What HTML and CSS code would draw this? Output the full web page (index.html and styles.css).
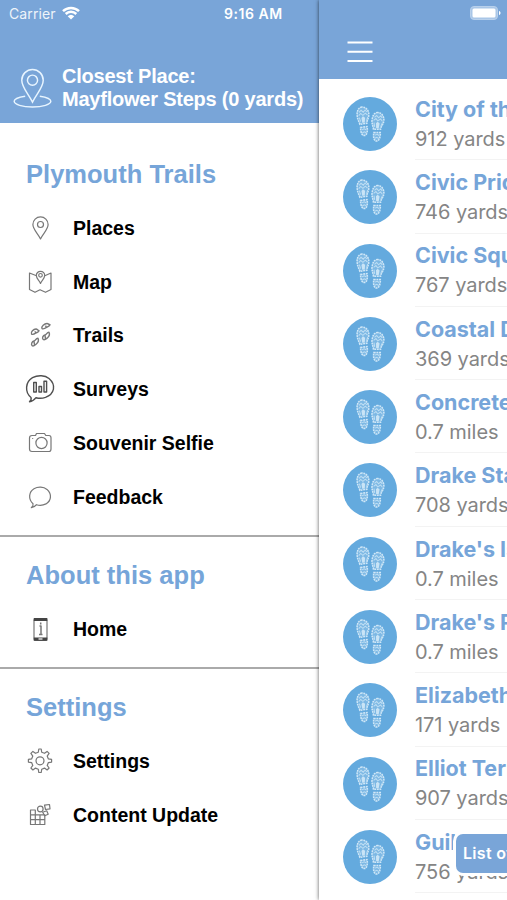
FILE: index.html
```html
<!DOCTYPE html>
<html lang="en">
<head>
<meta charset="utf-8">
<title>Plymouth Trails</title>
<link rel="stylesheet" href="styles.css">
</head>
<body>
<svg class="defs" width="0" height="0" aria-hidden="true">
  <symbol id="shoe" viewBox="0 0 14 30">
    <path class="tread" d="M6 1C2.500 1 .8 5 .9 9c.1 3.500 1.600 5.500 2.200 8.500l6.800-.6c0-3 2.500-5 2.400-9C12.200 4 9.500 1 6 1Z"/>
    <path class="tread" d="m3.700 20.500 6.200-.4c.6 3-.1 8.400-2.900 8.400-3 0-3.600-4.500-3.300-8Z"/>
    <path class="lugs" d="m3 6 2-2 2 2 2-2 1.500 2M2.500 9l2-2 2 2 2.500-2 2 2M4 15l-1-4M10 14l1-3M5 23l2-1 2 1M5 26l2-1 2 1"/>
    <path class="sole" d="M5 11.500 6.500 10 8.500 11.500 8 16H5.500Z"/>
  </symbol>
  <symbol id="steps" viewBox="0 0 54 54">
    <circle cx="27" cy="27" r="27" fill="#64aade"/>
    <use href="#shoe" x="13.500" y="8.500" width="14.500" height="32" transform="rotate(-3 21 25)"/>
    <use href="#shoe" x="27.500" y="13.500" width="14.500" height="33" transform="rotate(5 34 30)"/>
  </symbol>
</svg>
<div class="screen">
  <aside class="drawer">
    <header class="drawer-head">
      <div class="status">
        <span class="carrier">Carrier</span>
        <svg class="wifi" viewBox="0 0 18 14"><path d="M1 5.200a11.500 11.500 0 0 1 16 0M3.700 8a7.600 7.600 0 0 1 10.600 0"/><path class="dot" d="m9 13.500-3.300-3.300a4.800 4.800 0 0 1 6.600 0Z"/></svg>
        <span class="time">9:16 AM</span>
      </div>
      <div class="closest">
        <svg class="closest-pin" viewBox="0 0 40 42"><path d="M20 35.500C16 27 9 20.500 9 13a11 11 0 0 1 22 0c0 7.500-7 14-11 22.500Z"/><circle cx="20" cy="13" r="5.200"/><path d="M12.500 29.500C6 30.500 1.200 32.300 1.200 34.700c0 3.200 8.400 5.800 18.800 5.800s18.800-2.600 18.800-5.800c0-2.400-4.800-4.200-11.300-5.200"/></svg>
        <p>Closest Place:<br><span class="place">Mayflower Steps (0 yards)</span></p>
      </div>
    </header>
    <section class="group trails">
      <h2>Plymouth Trails</h2>
      <ul>
        <li><svg viewBox="0 0 34 34"><path d="M17.500 28C15.500 23 9.900 18.700 9.900 13.500a7.600 7.600 0 0 1 15.200 0c0 5.200-5.600 9.500-7.600 14.500Z"/><circle cx="17.500" cy="13.500" r="3"/></svg><span>Places</span></li>
        <li><svg viewBox="0 0 34 34"><path d="M13.500 10.800 6.500 8v16.500l5.500 2.800 5-2.500 5.500 2.500 5.500-2.800V8l-6.200 2.800"/><path d="M17.500 18.500c-1-3-4.200-5-4.200-8a4.200 4.200 0 0 1 8.400 0c0 3-3.200 5-4.200 8Z"/><circle cx="17.500" cy="10.300" r="1.800"/></svg><span>Map</span></li>
        <li><svg class="prints" viewBox="0 0 34 34"><path d="M8.500 16c-1-2 2-5 4.500-5 1.500 0 1.500 1.500 3 1.700-.5 1.700-2 1.600-3 2.200-1.500 1-3.500 2-4.500 1.100Zm4.300-1.100-1-1.500"/><path d="M19 10.500c-1-2 2.500-5 5-5 1.500 0 1.500 1 3 1.200-.5 1.700-2 1.800-3 2.500-1.500 1-4 2.300-5 1.300Zm4.500-1-1-1.800"/><path d="M20.200 21.500c-1.500-1.500-.2-4 1.800-4.500s1.500-2.500 4-2.700c1 2.200-.2 4.500-1.700 5.700-1.500 1.300-2.800 2.500-4.100 1.500Zm2.300-.7-.5-3.500"/><path d="M9.200 27.800c-1.500-1.500-.2-4.300 1.800-4.800s1.500-2.500 4-2.700c1 2.200-.2 4.500-1.700 5.700-1.500 1.300-2.800 2.800-4.100 1.800Zm2.300-1-.5-3.500"/></svg><span>Trails</span></li>
        <li><svg class="dark" viewBox="0 0 34 34"><path d="M8 25.500C1.500 20 2.300 10 9.500 5.700c5.500-3 12.500-2.500 16.500.8 7.500 6.500 5.500 15.500-3.500 18.900-3.500 1.200-6.500 1.100-9.500.3-1.500 2-3.700 3.800-6.500 4 1.700-1.500 2.100-2.600 1.500-4.200Z"/><path d="M10.700 10.500h2.600V20h-2.600ZM16 14.500h2.500V20H16ZM21 9.300h2.600V20H21Z"/></svg><span>Surveys</span></li>
        <li><svg viewBox="0 0 34 34"><path d="M6.500 12c0-1.700.8-2.500 2.500-2.500h3.500l1-2h8l1.300 2H26c1.500 0 2 .8 2 2.300V23c0 1.700-.5 2.500-2 2.500H9c-1.700 0-2.500-.8-2.500-2.500Z"/><circle cx="18.500" cy="17" r="5.600"/><path d="M9.200 12.500h1"/></svg><span>Souvenir Selfie</span></li>
        <li><svg viewBox="0 0 34 34"><path d="M10 23.700c-5-4.500-4.200-12 1-15 4-2.200 9.500-2 13 .7 5 4.500 4.500 11.300-1 14.500-3 1.500-6.500 1.700-9.500.8-1.200 1.700-2.800 2.700-5.200 3 1.600-1.400 2.200-2.400 1.700-4Z"/></svg><span>Feedback</span></li>
      </ul>
    </section>
    <section class="group about">
      <h2>About this app</h2>
      <ul>
        <li><svg viewBox="0 0 34 34"><rect x="11" y="6.500" width="13" height="22" rx="1.500"/><path class="fill" d="M10.800 6h13.500v3H10.800ZM10.800 25.500h13.500v3.300H10.800Z"/><path d="M16.500 14h1.500v8M16 22.500h3.500M17.700 10.500v2" stroke-width="1.500"/><path class="light" d="M15.500 27h4"/></svg><span>Home</span></li>
      </ul>
    </section>
    <section class="group settings">
      <h2>Settings</h2>
      <ul>
        <li><svg viewBox="0 0 34 34"><path d="M15.300 8.200 15.800 5h2.400l.5 3.200 2.800 1.100 2.600-1.900 2 2-1.900 2.700 1.200 2.800 3.200.5v2.700l-3.200.5-1.200 2.800 1.900 2.600-2 2-2.600-1.900-2.800 1.200-.5 3.200h-2.400l-.5-3.200-2.800-1.200-2.600 1.900-2-2 1.900-2.600-1.200-2.800-3.200-.5v-2.700l3.200-.5 1.200-2.800-1.900-2.700 2-2 2.600 1.900Z"/><circle cx="17" cy="16.800" r="4"/></svg><span>Settings</span></li>
        <li><svg viewBox="0 0 34 34"><path d="M7.500 12h4.800v14.500H7.500ZM7.500 16.800h14.300v9.700H12.300v-9.700M7.500 21.700h14.300M17 16.800v9.700"/><circle cx="17.300" cy="11" r="2.800"/><path d="m21.500 7.200 5-.7.500 4.300-4.500.7ZM19.700 14.300l4-1.500 1.500 3.500-3.500 1.500Z"/></svg><span>Content Update</span></li>
      </ul>
    </section>
  </aside>
  <main class="content">
    <header class="bar">
      <div class="status right"><svg class="battery" viewBox="0 0 31 14"><rect x=".5" y=".5" width="27" height="13" rx="3.500"/><rect class="charge" x="2.500" y="2.500" width="23" height="9" rx="1.500"/><path class="charge" d="M29 5c2 .5 2 3.500 0 4Z"/></svg></div>
      <svg class="menu" viewBox="0 0 26 22"><path d="M.5 1.500h25M.5 10.800h25M.5 20h25"/></svg>
    </header>
    <div class="list">
      <article><svg><use href="#steps"/></svg><div><h3>City of the Sea</h3><p>912 yards</p></div></article>
      <article><svg><use href="#steps"/></svg><div><h3>Civic Pride</h3><p>746 yards</p></div></article>
      <article><svg><use href="#steps"/></svg><div><h3>Civic Square</h3><p>767 yards</p></div></article>
      <article><svg><use href="#steps"/></svg><div><h3>Coastal Defence</h3><p>369 yards</p></div></article>
      <article><svg><use href="#steps"/></svg><div><h3>Concrete</h3><p>0.7 miles</p></div></article>
      <article><svg><use href="#steps"/></svg><div><h3>Drake Statue</h3><p>708 yards</p></div></article>
      <article><svg><use href="#steps"/></svg><div><h3>Drake's Island</h3><p>0.7 miles</p></div></article>
      <article><svg><use href="#steps"/></svg><div><h3>Drake's Place</h3><p>0.7 miles</p></div></article>
      <article><svg><use href="#steps"/></svg><div><h3>Elizabethan</h3><p>171 yards</p></div></article>
      <article><svg><use href="#steps"/></svg><div><h3>Elliot Terrace</h3><p>907 yards</p></div></article>
      <article><svg><use href="#steps"/></svg><div><h3>Guildhall</h3><p>756 yards</p></div></article>
    </div>
    <div class="toggle">List of</div>
  </main>
</div>
</body>
</html>
```

FILE: styles.css
```css
* { box-sizing: border-box; margin: 0; padding: 0; }
body { width: 507px; height: 900px; overflow: hidden; background: #fff; font-family: "Liberation Sans", Arial, sans-serif; }
.defs { position: absolute; }
.screen { display: flex; width: 507px; height: 900px; overflow: hidden; }
.drawer { width: 319px; flex: none; background: #fff; }
.drawer-head { height: 123px; background: #79a5d8; color: #fff; }
.status { display: flex; align-items: center; height: 27px; padding-left: 9px; font-family: Inter, sans-serif; font-size: 14px; }
.carrier { width: 47px; letter-spacing: .1px; opacity: .88; white-space: nowrap; }
.wifi { width: 18px; height: 14px; margin: -2px 0 0 6px; fill: none; stroke: #fff; stroke-width: 2.500; }
.wifi .dot { fill: #fff; stroke: none; }
.time { margin-left: 144px; font-weight: 600; font-size: 14px; letter-spacing: .55px; white-space: nowrap; }
.closest { display: flex; margin-top: 38px; padding-left: 13px; }
.closest-pin { width: 39px; height: 42px; margin-top: 2px; fill: none; stroke: #e8f5ff; stroke-width: 1.500; }
.closest p { margin-left: 10px; font-size: 20px; font-weight: bold; line-height: 23px; letter-spacing: -.22px; white-space: nowrap; }
.group { border-bottom: 2px solid #aaa; overflow: hidden; }
.group:last-child { border: 0; }
.trails { height: 414px; }
.about { height: 132px; }
h2 { color: #76a5d9; font-size: 25.500px; line-height: 30px; letter-spacing: .02px; padding-left: 26px; white-space: nowrap; }
.trails h2 { margin-top: 36px; }
.about h2, .settings h2 { margin-top: 23px; }
.group ul { list-style: none; margin-top: 12.400px; }
.group li { display: flex; align-items: center; height: 53.750px; padding-left: 23px; font-size: 19.500px; font-weight: bold; color: #000; }
.group li svg { width: 34px; height: 34px; margin-top: -1px; fill: none; stroke: #777; stroke-width: 1.200; stroke-linejoin: round; }
.group li svg.prints { stroke-width: 1.400; }
.group li svg.dark { stroke: #505050; stroke-width: 1.400; }
.group li .fill { fill: #444; stroke: none; }
.group li .light { stroke: #fff; }
.group li span { margin-left: 16px; white-space: nowrap; }
.content { position: relative; width: 188px; flex: none; background: #fff; box-shadow: 0 0 4px rgba(0, 0, 0, .65); }
.bar { height: 79px; background: #79a5d8; }
.right { padding-left: 151px; }
.battery { width: 31px; height: 14px; flex: none; margin-top: -1px; fill: #a9c6e7; stroke: #b8d0eb; stroke-width: 1; }
.battery .charge { fill: #fff; stroke: none; }
.menu { display: block; width: 26px; height: 22px; margin: 14px 0 0 28px; stroke: #fff; stroke-width: 2; }
.list { padding-top: 8px; height: 821px; overflow: hidden; }
article { display: flex; height: 73.300px; padding-left: 24px; overflow: hidden; }
article > svg { width: 54px; height: 54px; flex: none; margin-top: 10px; }
article > div { width: 92px; height: 73.300px; flex: none; margin-left: 18px; overflow: hidden; border-bottom: 1px solid #f3f3f3; font-family: Inter, sans-serif; white-space: nowrap; }
article h3 { margin-top: 7.800px; font-size: 21.500px; line-height: 28px; font-weight: 650; color: #76a5d9; }
article p { margin-top: 2px; font-size: 20px; line-height: 28px; letter-spacing: -.05px; color: #858585; }
.tread { fill: #7db8e4; stroke: #d0e7f7; stroke-width: 1.500; stroke-dasharray: 1.800 .7; }
.lugs { fill: none; stroke: #bcddf3; stroke-width: 1; }
.sole { fill: #c9e4f6; }
.toggle { position: absolute; left: 137px; top: 834px; width: 60px; height: 39px; padding-left: 7px; border-radius: 7px; background: #79a5d8; color: #fff; font: 600 16px/39px Inter, sans-serif; letter-spacing: .3px; white-space: nowrap; box-shadow: 0 0 0 3px #fff; }
```
